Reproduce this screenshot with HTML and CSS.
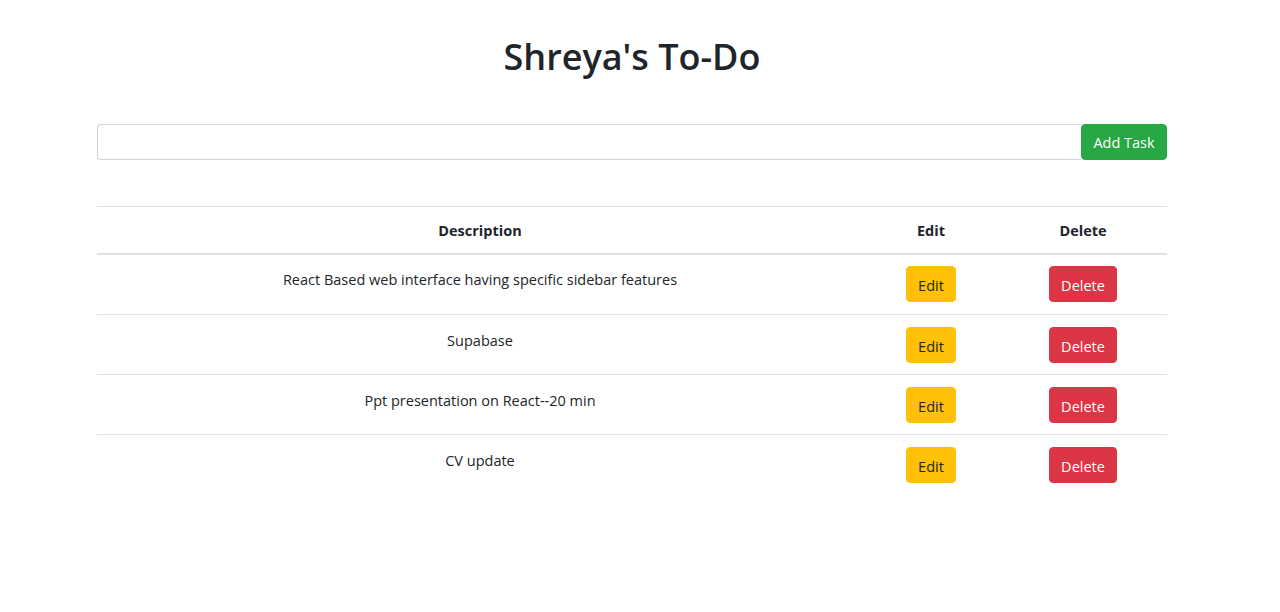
FILE: index.html
```html
<!DOCTYPE html>
<html>
<head>
<meta charset="utf-8">
<title>Shreya's To-Do</title>
<link rel="stylesheet" href="styles.css">
</head>
<body>
<div class="page">
  <div class="container">
    <h1 class="title">Shreya's To-Do</h1>
    <form class="add-form">
      <input class="task-input" type="text">
      <button class="btn btn-success" type="button">Add Task</button>
    </form>
    <table class="table">
      <thead>
        <tr>
          <th class="col-desc">Description</th>
          <th class="col-edit">Edit</th>
          <th class="col-del">Delete</th>
        </tr>
      </thead>
      <tbody>
        <tr>
          <td class="desc">React Based web interface having specific sidebar features</td>
          <td><button class="btn btn-warning">Edit</button></td>
          <td><button class="btn btn-danger">Delete</button></td>
        </tr>
        <tr>
          <td class="desc">Supabase</td>
          <td><button class="btn btn-warning">Edit</button></td>
          <td><button class="btn btn-danger">Delete</button></td>
        </tr>
        <tr>
          <td class="desc">Ppt presentation on React--20 min</td>
          <td><button class="btn btn-warning">Edit</button></td>
          <td><button class="btn btn-danger">Delete</button></td>
        </tr>
        <tr>
          <td class="desc">CV update</td>
          <td><button class="btn btn-warning">Edit</button></td>
          <td><button class="btn btn-danger">Delete</button></td>
        </tr>
      </tbody>
    </table>
  </div>
</div>
</body>
</html>
```
FILE: styles.css
```css
* { box-sizing: border-box; }
html, body { margin: 0; padding: 0; background: #fff; }
body {
  font-family: "Open Sans", "Noto Sans", sans-serif;
  font-size: 14.5px;
  line-height: 24px;
  color: #212529;
}
.page { width: 1264px; }
.container {
  width: 1070px;
  margin: 0 auto;
  padding-top: 33px;
}
.title {
  margin: 0;
  text-align: center;
  font-size: 36px;
  font-weight: 600;
  line-height: 48px;
}
.add-form {
  display: flex;
  margin-top: 43px;
}
.task-input {
  flex: 1;
  height: 36px;
  border: 1px solid #ced4da;
  border-radius: 4px 0 0 4px;
  border-right: none;
  font: inherit;
  padding: 0 12px;
}
.btn {
  font: inherit;
  border: 1px solid transparent;
  border-radius: 4px;
  height: 36px;
  padding: 4px 11px 0;
  line-height: 24px;
  cursor: pointer;
  display: inline-block;
  vertical-align: top;
}
.add-form .btn { padding-top: 2px; }
.btn-success { background: #28a745; color: #fff; border-color: #28a745; width: 86px; }
.btn-warning { background: #ffc107; color: #212529; border-color: #ffc107; }
.btn-danger { background: #dc3545; color: #fff; border-color: #dc3545; }
.table {
  width: 100%;
  margin-top: 46px;
  border-collapse: separate;
  border-spacing: 0;
}
.table th, .table td {
  text-align: center;
  vertical-align: top;
  padding: 12px 12px 11px;
  border-top: 1px solid #dee2e6;
}
.table td { height: 60px; }
.table td.desc { line-height: 28px; }
.table th {
  font-weight: 700;
  padding: 10px 12px 8px;
  line-height: 28px;
  border-bottom: 2px solid #dee2e6;
}
.table tbody tr:first-child td { border-top: none; padding-top: 11px; padding-bottom: 12px; height: 59px; }
.col-desc { width: 766px; }
.col-edit { width: 136px; }
.col-del { width: 168px; }
```
